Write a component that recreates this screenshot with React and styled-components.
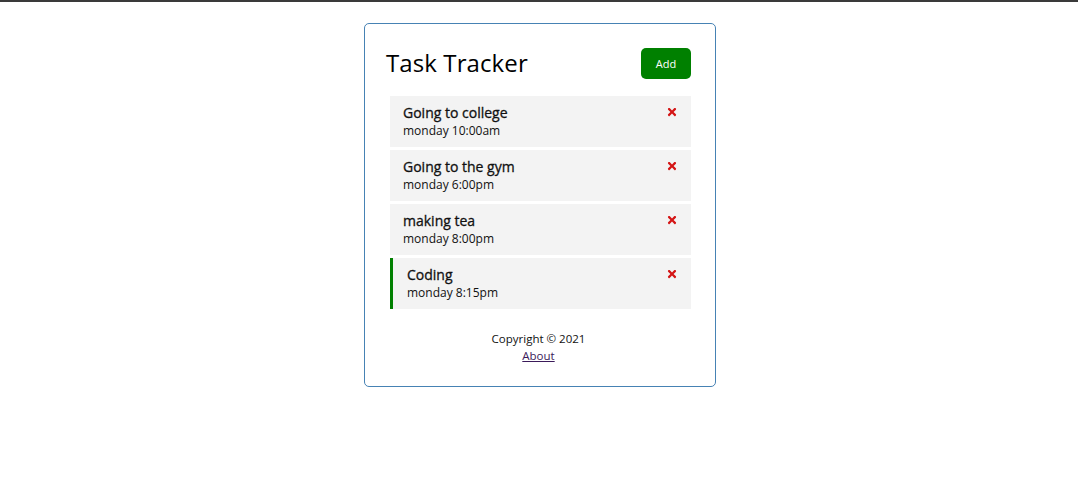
import React from 'react';
import styled, { createGlobalStyle } from 'styled-components';
import { FaTimes } from 'react-icons/fa';

const GlobalStyle = createGlobalStyle`
  * {
    box-sizing: border-box;
    margin: 0;
    padding: 0;
  }
  body {
    font-family: 'Open Sans', 'Noto Sans', sans-serif;
    background: #fff;
    border-top: 2px solid #3a3a3a;
  }
`

const Container = styled.div`
  width: 352px;
  margin: 21px 0 0 calc(50% - 175px);
  border: 1px solid steelblue;
  border-radius: 5px;
  padding: 23px 24px 22px 21px;
`

const Header = styled.header`
  display: flex;
  justify-content: space-between;
  align-items: center;
  margin-bottom: 17px;
`

const Title = styled.h1`
  font-size: 24px;
  font-weight: 500;
  line-height: 32px;
  color: #000;
  letter-spacing: 0.1px;
`

const Button = styled.button`
  background: ${props => props.color};
  color: #fff;
  border: none;
  border-radius: 5px;
  width: 50px;
  height: 31px;
  font-family: inherit;
  font-size: 11px;
  cursor: pointer;
`

const List = styled.div`
  display: flex;
  flex-direction: column;
  gap: 3px;
  margin-left: 4px;
`

const Task = styled.div`
  background: #f3f3f3;
  height: 51px;
  padding: 7px 13px 0 ${props => (props.reminder ? '14px' : '13px')};
  border-left: ${props => (props.reminder ? '3px solid green' : 'none')};
  display: flex;
  justify-content: space-between;
  align-items: flex-start;
`

const TaskText = styled.div`
  display: flex;
  flex-direction: column;
`

const TaskTitle = styled.h3`
  font-size: 14px;
  font-weight: 500;
  line-height: 19px;
  color: #111;
  -webkit-text-stroke: 0.3px #111;
`

const TaskDay = styled.p`
  font-size: 12px;
  line-height: 18px;
  color: #111;
`

const Remove = styled.span`
  color: #d41515;
  display: flex;
  margin-top: 3px;
  font-size: 12px;
  cursor: pointer;
`

const Footer = styled.footer`
  margin-top: 21px;
  text-align: center;
  font-size: 11.5px;
  line-height: 17px;
  color: #111;
`

const FooterLink = styled.a`
  color: #3b1a5a;
  text-decoration: underline;
`

const tasks = [
  { id: 1, text: 'Going to college', day: 'monday 10:00am', reminder: false },
  { id: 2, text: 'Going to the gym', day: 'monday 6:00pm', reminder: false },
  { id: 3, text: 'making tea', day: 'monday 8:00pm', reminder: false },
  { id: 4, text: 'Coding', day: 'monday 8:15pm', reminder: true },
]

const App = () => {
  return (
    <>
      <GlobalStyle />
      <Container>
        <Header>
          <Title>Task Tracker</Title>
          <Button color="green">Add</Button>
        </Header>
        <List>
          {tasks.map(task => (
            <Task key={task.id} reminder={task.reminder}>
              <TaskText>
                <TaskTitle>{task.text}</TaskTitle>
                <TaskDay>{task.day}</TaskDay>
              </TaskText>
              <Remove><FaTimes /></Remove>
            </Task>
          ))}
        </List>
        <Footer>
          <p>Copyright &copy; 2021</p>
          <FooterLink href="#about">About</FooterLink>
        </Footer>
      </Container>
    </>
  )
}

export default App
